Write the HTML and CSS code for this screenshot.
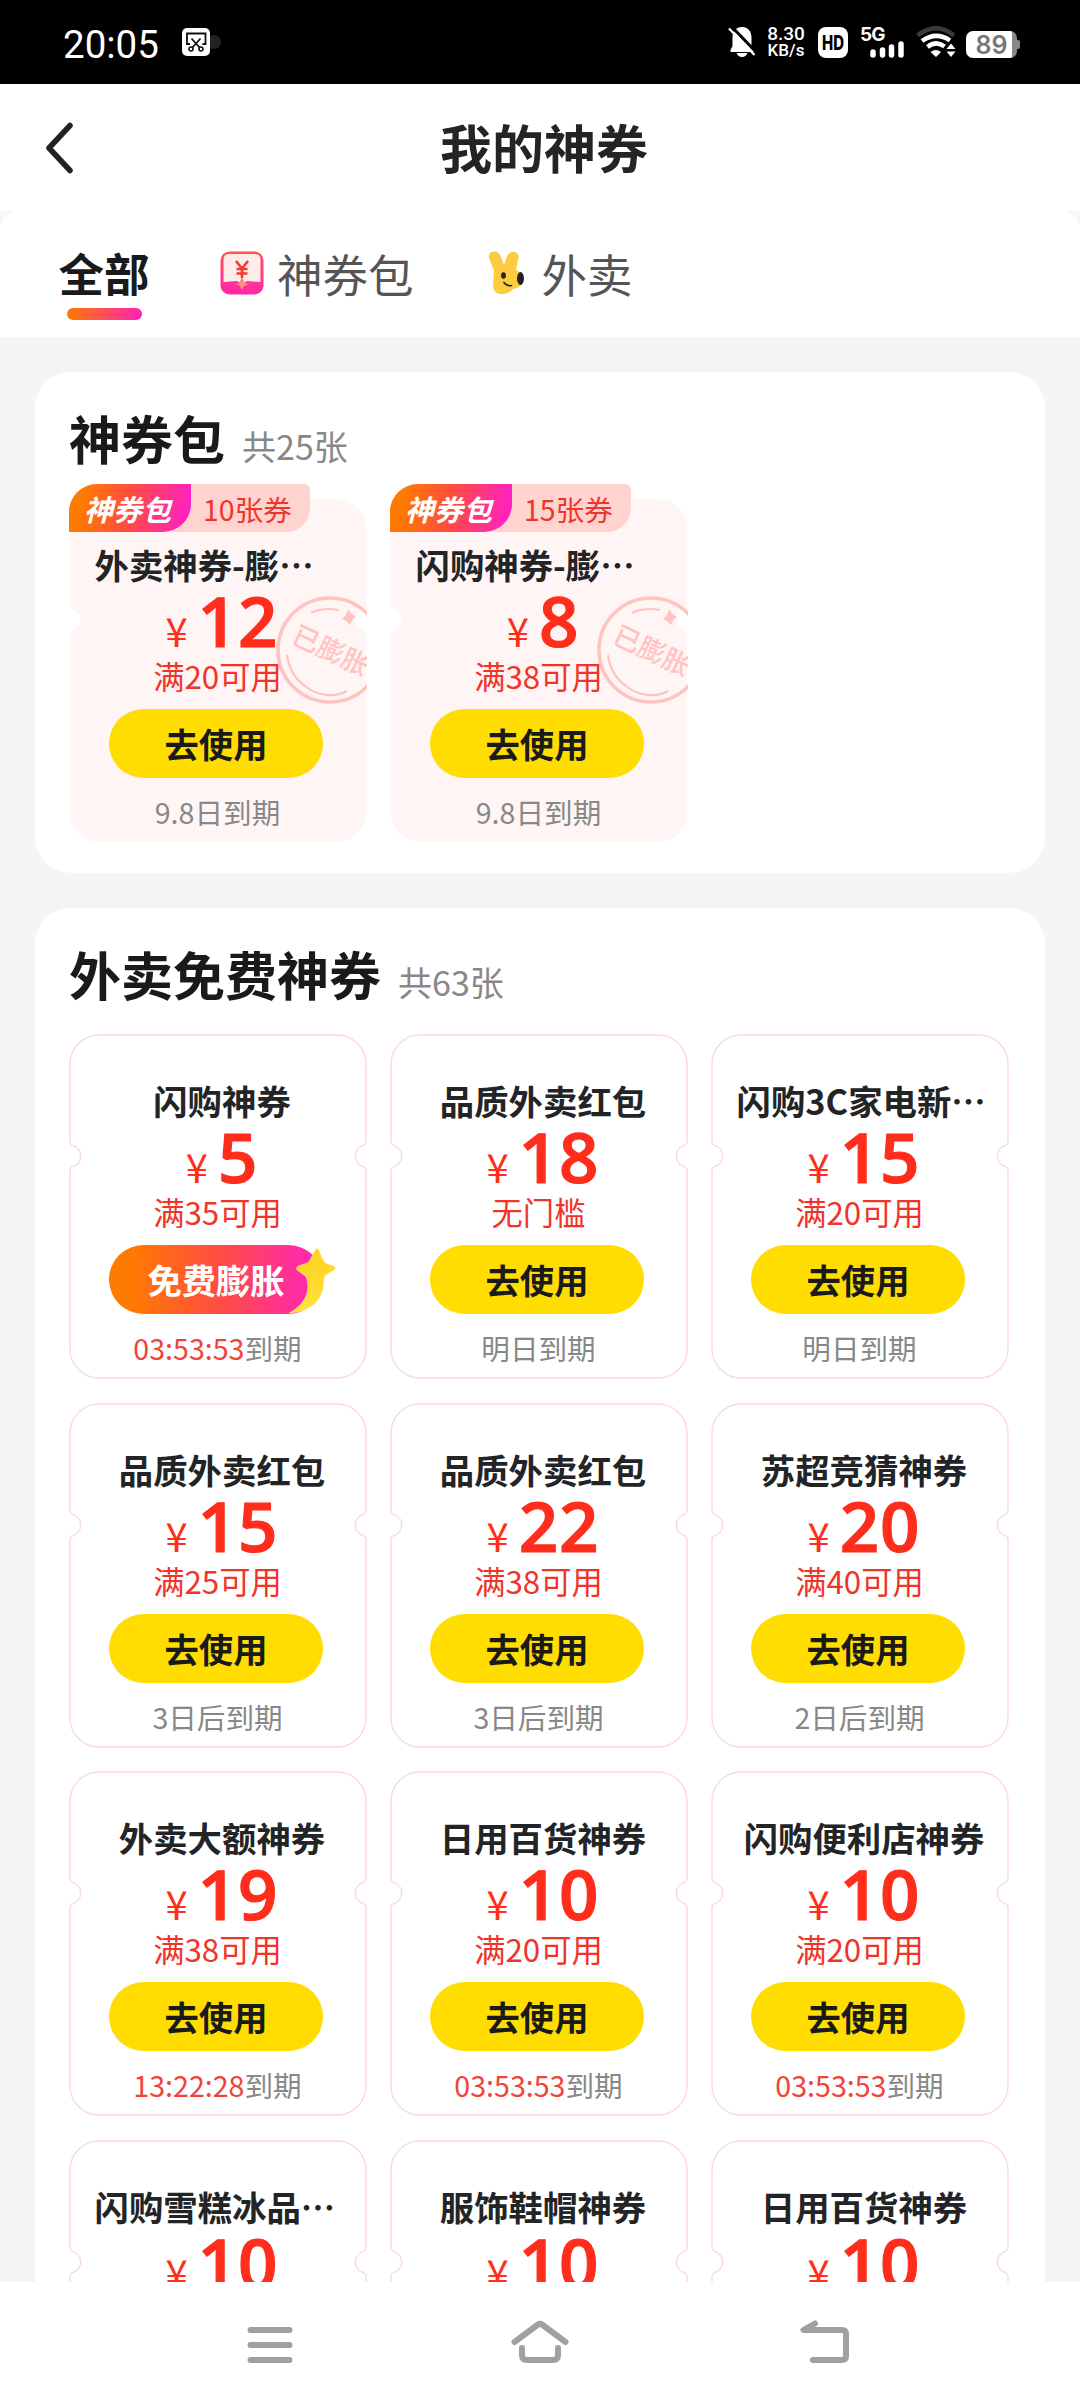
FILE: index.html
```html
<!DOCTYPE html>
<html lang="zh-CN">
<head>
<meta charset="utf-8">
<title>我的神券</title>
<link rel="stylesheet" href="styles.css">
</head>
<body>
<svg class="defs" aria-hidden="true">
  <defs>
    <symbol id="ticket" viewBox="0 0 298 345">
      <path d="M30 1H268A29 29 0 0 1 297 30V107C297 112 294 111 291 113A11 11 0 0 0 291 131C294 133 297 132 297 137V315A29 29 0 0 1 268 344H30A29 29 0 0 1 1 315V137C1 132 4 133 7 131A11 11 0 0 0 7 113C4 111 1 112 1 107V30A29 29 0 0 1 30 1Z"/>
    </symbol>
    <symbol id="stamp" viewBox="0 0 110 110">
      <g fill="none" stroke="#ffc4c0" stroke-width="3.600">
        <circle cx="55" cy="55" r="52"/>
        <path stroke-width="2.200" d="M36 18Q48 12 64 15M12 60C14 75 20 84 30 91C42 101 60 103 72 96"/>
      </g>
      <path fill="#ffc4c0" d="M73 14Q75 18 81 22Q77 24 75 30Q71 25 67 24Q72 20 73 14Z"/>
      <text x="56" y="65" text-anchor="middle" transform="rotate(25 55 55)" class="stamp-text">已膨胀</text>
    </symbol>
  </defs>
</svg>

<header class="status">
  <span class="clock">20:05</span>
  <svg class="shot" width="40" height="30" viewBox="0 0 40 30"><circle cx="32" cy="15" r="7" fill="#222"/><rect x="0" y="1" width="28" height="28" rx="5" fill="#fff"/><path d="M8 17H5V6.500H23.500V17H20.500M9.500 11.500L18 21M18.500 11.500L10 21" fill="none" stroke="#111" stroke-width="1.800"/><circle cx="9" cy="22" r="2" fill="none" stroke="#111" stroke-width="1.600"/><circle cx="19" cy="22" r="2" fill="none" stroke="#111" stroke-width="1.600"/></svg>
  <svg class="bell" width="28" height="32" viewBox="0 0 28 32"><path fill="#fff" d="M2.500 26V24L4.500 20V12C4.500 5 8 1 14 1S23.500 5 23.500 12V20L26 26ZM8.500 27H19.500Q18 31 14 31T8.500 27Z"/><path d="M3.500 .5L29 27" stroke="#000" stroke-width="3"/><path d="M1 2.500L26.500 29" stroke="#fff" stroke-width="2.200"/></svg>
  <span class="speed"><span>8.30</span><span>KB/s</span></span>
  <svg class="hd" width="30" height="31" viewBox="0 0 30 31"><rect width="30" height="31" rx="8" fill="#fff"/><text x="4" y="23" textLength="22" lengthAdjust="spacingAndGlyphs">HD</text></svg>
  <span class="cell"><span class="gen">5G</span><svg width="36" height="17" viewBox="0 0 36 17"><path d="M4 11V14M13.500 9V14M22.500 6V14M32 3V14" stroke="#fff" stroke-width="5.500" stroke-linecap="round"/></svg></span>
  <svg class="wifi" width="42" height="32" viewBox="0 0 42 32"><g fill="none" stroke-width="4.500"><path stroke="#3a3a3a" d="M1.500 9.500Q20-5 38 9.500"/><path stroke="#fff" d="M6 15Q20 5 34 14.500M11.500 21Q20 14 28.500 20.500"/></g><path fill="#fff" d="M14.500 26Q20 22 25 26L20 31ZM30.500 23L35 17.500L39.500 23ZM30.500 25.500H39.500L35 31Z"/></svg>
  <span class="battery">89</span>
</header>

<div class="titlebar">
  <svg class="back" width="30" height="52" viewBox="0 0 30 52"><path d="M25 3.500L4 26L25 48.500" fill="none" stroke="#222" stroke-width="5.500" stroke-linecap="round" stroke-linejoin="round"/></svg>
  <h1>我的神券</h1>
</div>

<div class="tabwrap">
  <nav class="tabs">
    <a class="tab active">全部</a>
    <a class="tab pack"><svg width="44" height="44" viewBox="0 0 44 44"><defs><linearGradient id="cp" x2="0" y2="1"><stop offset="0" stop-color="#fb5656"/><stop offset="1" stop-color="#ff27ad"/></linearGradient></defs><rect x=".5" y=".5" width="43" height="43" rx="9" fill="url(#cp)"/><path fill="#fdecea" d="M3.500 9Q3.500 3 9 3H35Q40.500 3 40.500 9V31L27 30L22 33L17 30L3.500 31Z"/><path fill="#f9927c" d="M22 26L25 32L29 33L24 35L22 39L20 35L15 33L19 32Z"/><path d="M16 10L22 17.500L28 10M16.500 18H27.500M16.500 22.500H27.500M22 17.500V27" fill="none" stroke="#f43b2f" stroke-width="2.600"/></svg>神券包</a>
    <a class="tab food"><svg width="37" height="44" viewBox="0 0 37 44"><path fill="#fccb3f" d="M6 20L1 7Q0 1 6 .500Q11 0 13 6L16 14L19 5Q22 0 27 1Q32 3 30 9L28 19Q37 23 35 30Q33 37 25 38Q20 44 12 43Q6 42 5 36Z"/><ellipse cx="32.500" cy="27.500" rx="3.500" ry="6.500" fill="#222"/><ellipse cx="15.500" cy="24.500" rx="2.400" ry="3.200" fill="#222"/><path d="M16 31.500Q19 35.500 23.500 34.500" fill="none" stroke="#222" stroke-width="1.600" stroke-linecap="round"/></svg>外卖</a>
  </nav>
</div>

<main class="content">
  <section class="panel packs">
    <h2>神券包<small>共25张</small></h2>
    <div class="grid">
      <article class="card filled"><svg class="shape"><use href="#ticket"/></svg><svg class="stamp"><use href="#stamp" width="110" height="110"/></svg><div class="ribbon"><b>神券包</b><span>10张券</span></div><h3 class="cut">外卖神券-膨…</h3><p class="price"><i>¥</i>12</p><p class="cond">满20可用</p><button>去使用</button><p class="due">9.8日到期</p></article>
      <article class="card filled"><svg class="shape"><use href="#ticket"/></svg><svg class="stamp"><use href="#stamp" width="110" height="110"/></svg><div class="ribbon"><b>神券包</b><span>15张券</span></div><h3 class="cut">闪购神券-膨…</h3><p class="price"><i>¥</i>8</p><p class="cond">满38可用</p><button>去使用</button><p class="due">9.8日到期</p></article>
    </div>
  </section>

  <section class="panel">
    <h2>外卖免费神券<small>共63张</small></h2>
    <div class="grid">
      <article class="card"><svg class="shape"><use href="#ticket"/></svg><h3>闪购神券</h3><p class="price"><i>¥</i>5</p><p class="cond">满35可用</p><button class="boost">免费膨胀<svg class="star" width="50" height="68" viewBox="0 0 50 68"><defs><linearGradient id="sg" x2="0" y2="1"><stop offset="0" stop-color="#ffd21f"/><stop offset="1" stop-color="#ffe23f"/></linearGradient></defs><path fill="url(#sg)" stroke="#fff" stroke-opacity=".5" stroke-width=".6" d="M27 4Q29 1 31 4L35 14Q37 17 40 18L46 20Q49 22 46 24L38 29Q36 31 36 35C36 52 25 66 1 67C16 59 22 47 19 34Q19 32 17 30L9 24Q7 22 10 20L19 17Q22 15 23 12Z"/></svg></button><p class="due"><em>03:53:53</em>到期</p></article>
      <article class="card"><svg class="shape"><use href="#ticket"/></svg><h3>品质外卖红包</h3><p class="price"><i>¥</i>18</p><p class="cond">无门槛</p><button>去使用</button><p class="due">明日到期</p></article>
      <article class="card"><svg class="shape"><use href="#ticket"/></svg><h3 class="cut">闪购3C家电新…</h3><p class="price"><i>¥</i>15</p><p class="cond">满20可用</p><button>去使用</button><p class="due">明日到期</p></article>

      <article class="card"><svg class="shape"><use href="#ticket"/></svg><h3>品质外卖红包</h3><p class="price"><i>¥</i>15</p><p class="cond">满25可用</p><button>去使用</button><p class="due">3日后到期</p></article>
      <article class="card"><svg class="shape"><use href="#ticket"/></svg><h3>品质外卖红包</h3><p class="price"><i>¥</i>22</p><p class="cond">满38可用</p><button>去使用</button><p class="due">3日后到期</p></article>
      <article class="card"><svg class="shape"><use href="#ticket"/></svg><h3>苏超竞猜神券</h3><p class="price"><i>¥</i>20</p><p class="cond">满40可用</p><button>去使用</button><p class="due">2日后到期</p></article>

      <article class="card"><svg class="shape"><use href="#ticket"/></svg><h3>外卖大额神券</h3><p class="price"><i>¥</i>19</p><p class="cond">满38可用</p><button>去使用</button><p class="due"><em>13:22:28</em>到期</p></article>
      <article class="card"><svg class="shape"><use href="#ticket"/></svg><h3>日用百货神券</h3><p class="price"><i>¥</i>10</p><p class="cond">满20可用</p><button>去使用</button><p class="due"><em>03:53:53</em>到期</p></article>
      <article class="card"><svg class="shape"><use href="#ticket"/></svg><h3>闪购便利店神券</h3><p class="price"><i>¥</i>10</p><p class="cond">满20可用</p><button>去使用</button><p class="due"><em>03:53:53</em>到期</p></article>

      <article class="card"><svg class="shape"><use href="#ticket"/></svg><h3 class="cut">闪购雪糕冰品…</h3><p class="price"><i>¥</i>10</p></article>
      <article class="card"><svg class="shape"><use href="#ticket"/></svg><h3>服饰鞋帽神券</h3><p class="price"><i>¥</i>10</p></article>
      <article class="card"><svg class="shape"><use href="#ticket"/></svg><h3>日用百货神券</h3><p class="price"><i>¥</i>10</p></article>
    </div>
  </section>
</main>

<footer class="sysnav">
  <svg width="60" height="60" viewBox="0 0 60 60"><path d="M10.500 18H49.500M10.500 33H49.500M10.500 48H49.500"/></svg>
  <svg class="home" width="60" height="60" viewBox="0 0 60 60"><path d="M4.500 30L28 12.500Q30 11 32 12.500L55.500 30M12 36V43Q12 48 17 48H43Q48 48 48 43V36"/></svg>
  <svg class="return" width="60" height="60" viewBox="0 0 60 60"><path d="M20 11.500L8.500 18H47Q51 18 51 22V44Q51 48 47 48H18"/></svg>
</footer>
</body>
</html>
```

FILE: styles.css
```css
* { box-sizing: border-box; margin: 0; padding: 0; }

body {
  width: 1080px;
  height: 2408px;
  overflow: hidden;
  display: flex;
  flex-direction: column;
  background: #f5f5f5;
  color: #222426;
  font-family: "Noto Sans CJK SC", sans-serif;
}

.defs { position: absolute; width: 0; height: 0; }

/* Phone status bar */
.status {
  flex: none;
  height: 84px;
  padding-left: 63px;
  display: flex;
  align-items: center;
  background: #000;
  color: #fff;
}
.clock { width: 119px; font: 450 38.500px/78px Roboto, sans-serif; padding-top: 6px; }
.shot { width: 40px; }
.bell { margin-left: 506px; }
.speed { margin-left: 11px; width: 38px; display: flex; flex-direction: column; align-items: center; font: 500 19px/17px Roboto, sans-serif; }
.speed span:last-child { font-size: 17px; }
.hd { margin-left: 13px; font: 800 20px Inter, sans-serif; fill: #000; }
.cell { margin-left: 12px; width: 45px; height: 31px; display: flex; flex-direction: column; align-items: flex-end; }
.gen { align-self: flex-start; height: 14px; font: 700 19px/15px Inter, sans-serif; letter-spacing: -1px; }
.wifi { margin-left: 11px; }
.battery { position: relative; margin: 4px 0 0 8px; width: 51px; height: 27px; border-radius: 7px; background: linear-gradient(90deg, #fff 46px, #888 46px); color: #777; font: 600 25px/28px Inter, sans-serif; text-align: center; }
.battery::after { content: ""; position: absolute; left: 51px; top: 9px; width: 3px; height: 9px; border-radius: 0 2px 2px 0; background: #888; }

/* Page title */
.titlebar { flex: none; height: 127px; display: flex; align-items: center; padding-left: 45px; background: #fff; }
.titlebar h1 { margin-left: 365px; padding-bottom: 2px; font-size: 52px; line-height: 74px; font-weight: 700; }

/* Category tabs */
.tabwrap { flex: none; background: #f7f7f7; }
.tabs { height: 126px; display: flex; border-radius: 18px 18px 0 0; background: #fff; padding: 28px 0 0 58.500px; }
.tab { display: flex; align-items: center; height: 67px; font-size: 45.500px; line-height: 66px; color: #555; }
.tab.active { flex-direction: column; align-items: center; height: 81px; color: #1a1a1a; font-weight: 700; line-height: 67px; }
.tab.active::after { content: ""; flex: none; margin-top: 2px; width: 75px; height: 12px; border-radius: 6px; background: linear-gradient(90deg, #ff7a00, #ff22b4); }
.tab.pack { margin-left: 70.500px; gap: 13px; }
.tab.food { margin-left: 74px; gap: 17px; }

/* Panels */
.content { flex: 1; min-height: 0; overflow: hidden; padding: 35px 35px 0; display: flex; flex-direction: column; gap: 35px; }
.panel { flex: none; background: #fff; border-radius: 36px; padding: 28px 35px 30px 34px; }
.packs { height: 501px; }
.panel h2 { height: 98px; font-size: 52px; line-height: 76px; font-weight: 700; color: #1a1a1a; display: flex; align-items: baseline; gap: 17px; }
.panel small { font-size: 34px; font-weight: 400; color: #888; }
.grid { display: grid; grid-template-columns: repeat(3, 298px); grid-auto-rows: 345px; gap: 23.700px 23px; }

/* Coupon */
.card { position: relative; display: flex; flex-direction: column; align-items: center; padding: 41px 0 0; }
.card > * { position: relative; }
.card .shape { position: absolute; inset: 0; width: 298px; height: 345px; fill: #fff; stroke: #fbdcdc; stroke-width: 1.500px; }
.filled .shape { fill: #fff5f5; stroke: none; }
.card h3 { width: 255px; margin-left: 8px; height: 51px; font-size: 34.400px; line-height: 50px; font-weight: 700; text-align: center; white-space: nowrap; }
.card h3.cut { text-align: left; }
.price { height: 61px; margin-left: 8px; font: 600 69px/61px "Open Sans", sans-serif; letter-spacing: 1px; -webkit-text-stroke: 1.200px #ff2d1c; color: #ff2d1c; display: flex; align-items: baseline; }
.price i { font: 400 40px/44px "Noto Sans CJK SC", sans-serif; margin-right: 10px; letter-spacing: 0; -webkit-text-stroke: 0; }
.cond { height: 58px; margin-right: 1px; font-size: 31.300px; line-height: 50px; color: #f0342a; }
.card button { width: 214px; height: 69px; margin-right: 4px; border: 0; border-radius: 35px; background: #ffdd00; color: #1a1a1a; font: 700 34.300px/69px "Noto Sans CJK SC", sans-serif; }
.card button.boost { background: linear-gradient(90deg, #ff7a00 10%, #ff4a4a 55%, #ff2aa8 90%); color: #fff; }
.star { position: absolute; left: 179px; top: 1px; }
.due { margin: 13px 1px 0 0; font-size: 28.600px; line-height: 42px; color: #888; }
.due em { font-style: normal; color: #f0433a; }

.card .ribbon { position: absolute; left: 0; top: -14px; display: flex; width: 241px; height: 48px; background: #ffd3cf; border-radius: 28px 6px 24px 0; }
.ribbon b { width: 122px; padding-right: 5px; border-radius: 28px 0 28px 0; background: linear-gradient(100deg, #ff7a00 12%, #ff4b43 50%, #ff22c0 95%); color: #fff; font-size: 29px; line-height: 48px; font-style: italic; text-align: center; }
.ribbon span { width: 119px; padding-left: 12px; font-size: 28.500px; line-height: 49px; color: #f0342a; }
.card .stamp { position: absolute; left: 206px; top: 97px; width: 92px; height: 110px; }
.stamp-text { font: 500 27px "Noto Sans CJK SC", sans-serif; fill: #ffc4c0; }

/* System navigation */
.sysnav { flex: none; height: 126px; background: #fff; display: flex; padding: 30px 0 0 240px; }
.sysnav path { fill: none; stroke: #a0a0a0; stroke-width: 6px; stroke-linecap: round; stroke-linejoin: round; }
.home { margin-left: 210px; }
.return { margin-left: 225px; }
```
